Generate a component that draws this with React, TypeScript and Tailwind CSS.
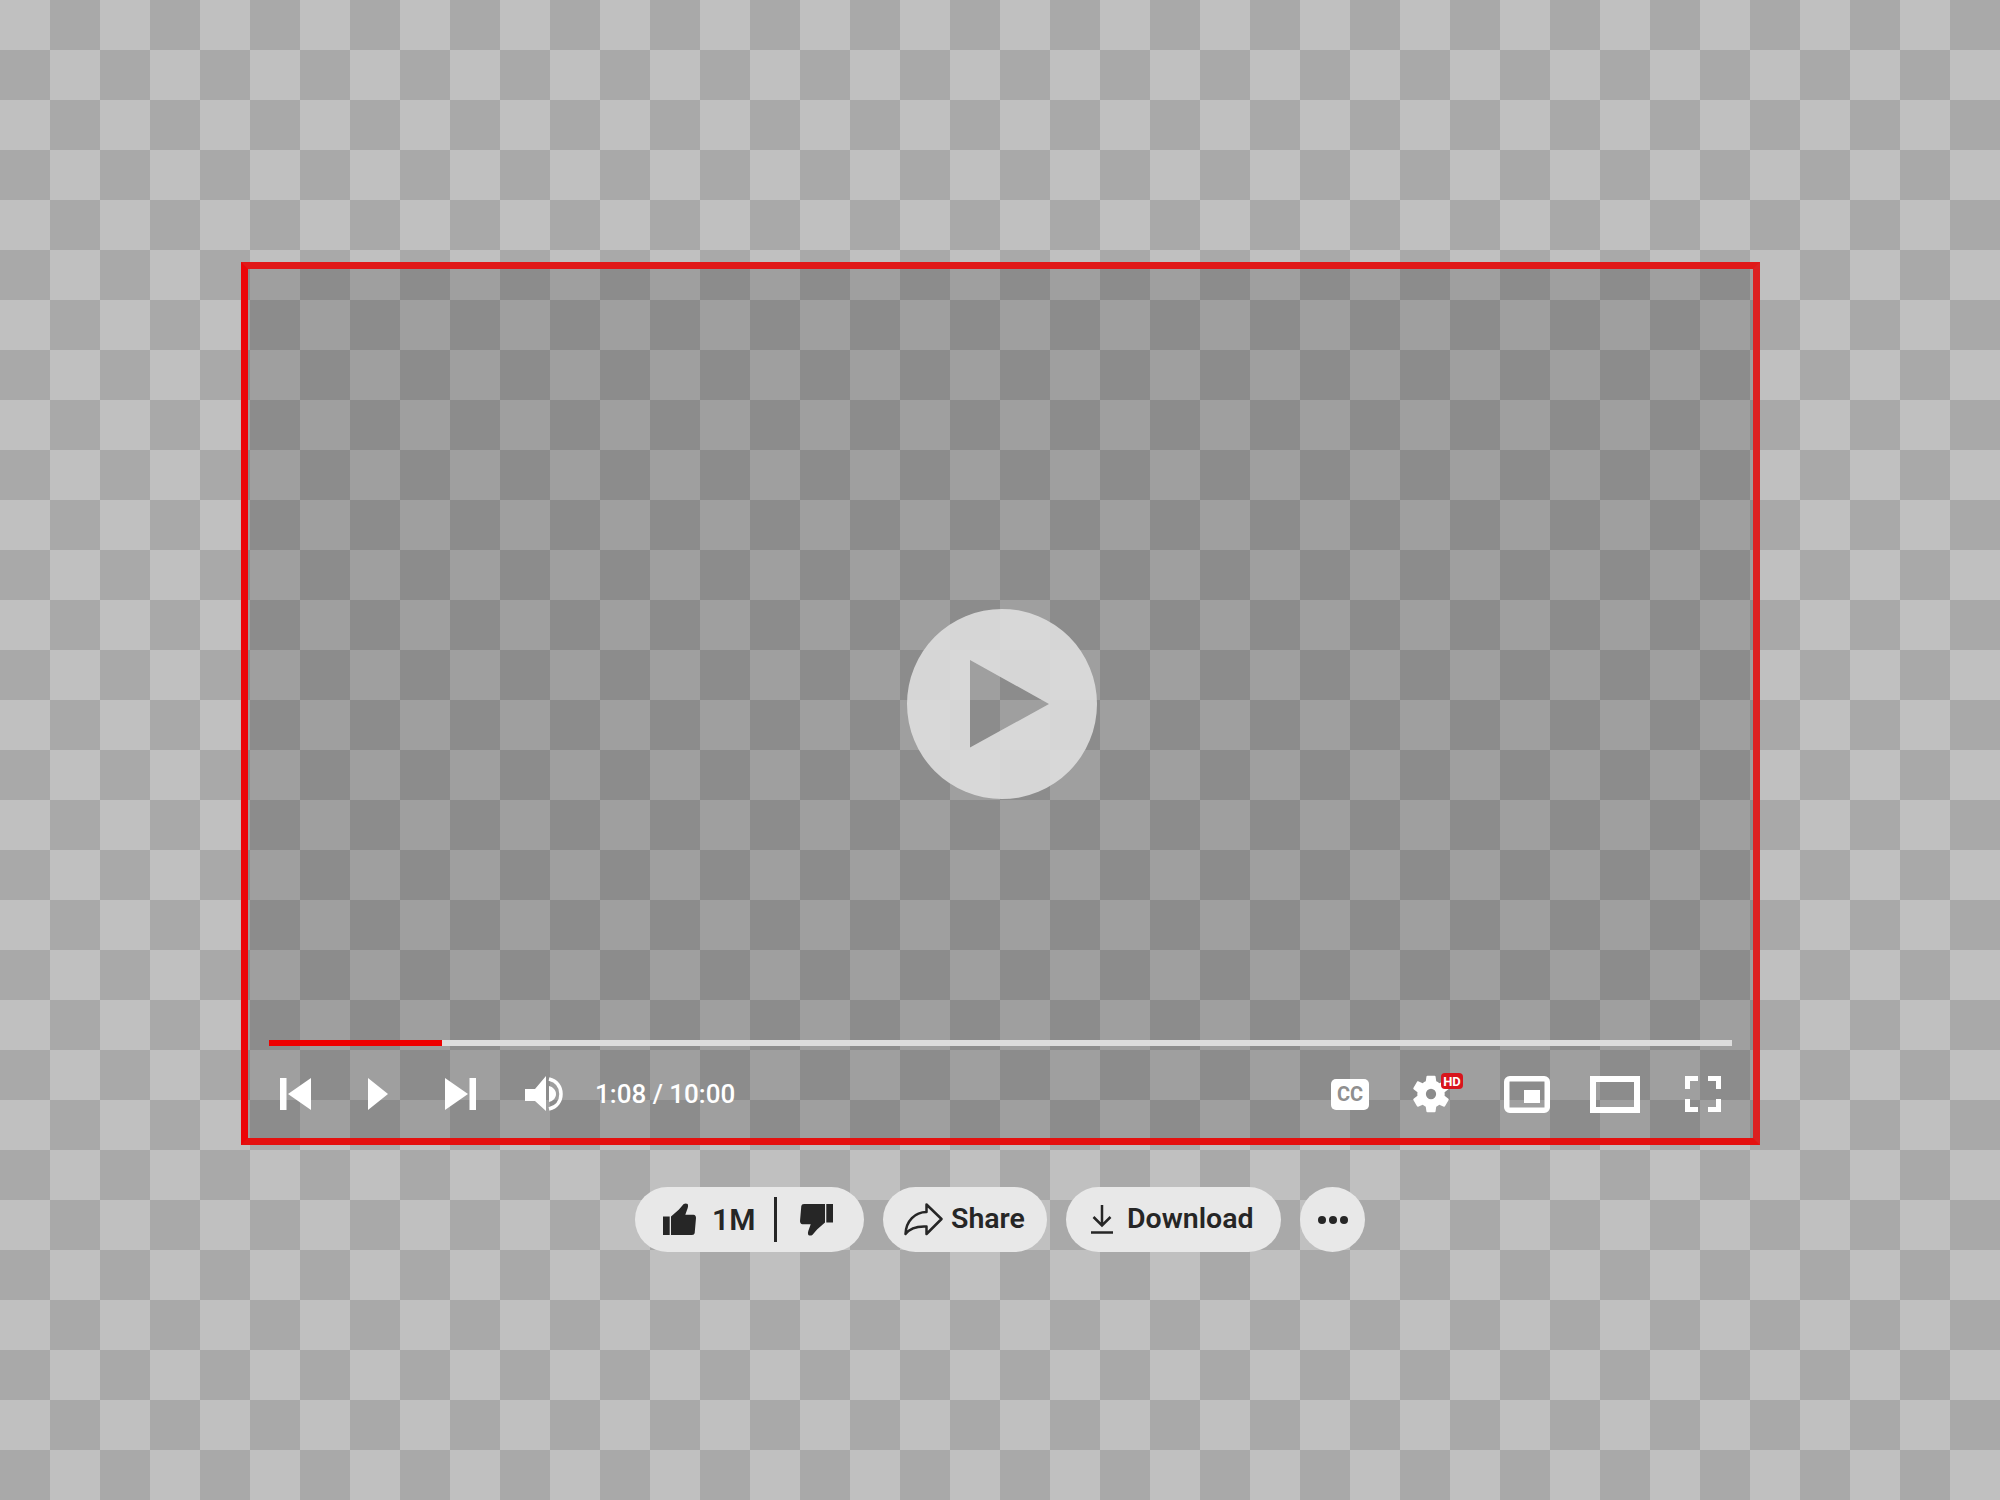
const thumbPath =
  "M0 13.5h6.7V32H0z M8 13.5L15.7 6.7L20.7 1Q22.7 0 24.7 1Q25.5 3 24.7 5L22.3 11.7H30.5Q33 12 33 15L31.7 30Q31.5 32 29 32H8z";

function ThumbIcon({ down }: { down?: boolean }) {
  return (
    <svg width="33" height="33" viewBox="0 0 33 33" className={down ? "rotate-180" : ""}>
      <path d={thumbPath} fill="#262626" />
    </svg>
  );
}

function Gear() {
  return (
    <svg width="36" height="38" viewBox="2.6 2 18.8 20">
      <path
        fill="#fff"
        fillRule="evenodd"
        d="M19.14 12.94c.04-.3.06-.61.06-.94 0-.32-.02-.64-.07-.94l2.03-1.58c.18-.14.23-.41.12-.61l-1.92-3.32c-.12-.22-.37-.29-.59-.22l-2.39.96c-.5-.38-1.03-.7-1.62-.94l-.36-2.54c-.04-.24-.24-.41-.48-.41h-3.84c-.24 0-.43.17-.47.41l-.36 2.54c-.59.24-1.13.57-1.62.94l-2.39-.96c-.22-.08-.47 0-.59.22L2.74 8.87c-.12.21-.08.47.12.61l2.03 1.58c-.05.3-.09.63-.09.94s.02.64.07.94l-2.03 1.58c-.18.14-.23.41-.12.61l1.92 3.32c.12.22.37.29.59.22l2.39-.96c.5.38 1.03.7 1.62.94l.36 2.54c.05.24.24.41.48.41h3.84c.24 0 .44-.17.47-.41l.36-2.54c.59-.24 1.13-.56 1.62-.94l2.39.96c.22.08.47 0 .59-.22l1.92-3.32c.12-.22.07-.47-.12-.61l-2.01-1.58zM12 14.7a2.7 2.7 0 1 1 0-5.4 2.7 2.7 0 0 1 0 5.4z"
      />
    </svg>
  );
}

function PlayerControls() {
  return (
    <div className="flex h-[92px] items-center justify-between px-8 pt-1">
      <div className="flex items-center">
        <svg width="31" height="32" viewBox="0 0 31 32" fill="#fff">
          <path d="M0 0h6.5v32H0z M8 16L31 0v32z" />
        </svg>
        <svg width="20" height="32" viewBox="0 0 20 32" fill="#fff" className="ml-[57px]">
          <path d="M0 0L20 16L0 32z" />
        </svg>
        <svg width="31" height="32" viewBox="0 0 31 32" fill="#fff" className="ml-[57px]">
          <path d="M0 0L23 16L0 32z M24.5 0H31v32h-6.5z" />
        </svg>
        <svg width="38" height="36" viewBox="0 0 38 36" className="ml-[49px]">
          <path d="M0 13h10L21 0v35L10 25H0z" fill="#fff" />
          <path d="M24 10c4 1 7 4 7 8s-3 7-7 8z" fill="#fff" />
          <path d="M24 3c8 2 12 8 12 15s-4 13-12 15" fill="none" stroke="#fff" strokeWidth="3.5" />
        </svg>
        <span className="ml-8 text-[26px] font-medium leading-none text-white">1:08 / 10:00</span>
      </div>
      <div className="flex items-center">
        <div className="flex h-[31px] w-[38px] items-center justify-center rounded-[5px] bg-white text-[20px] font-bold leading-none text-[#8f8f8f]">
          CC
        </div>
        <div className="relative ml-[44px]">
          <Gear />
          <span className="absolute -right-[14px] -top-[2px] flex h-4 w-[22px] items-center justify-center rounded-[4px] bg-[#d8141c] text-[13px] font-bold leading-none text-white">
            HD
          </span>
        </div>
        <svg width="46" height="37" viewBox="0 0 46 37" className="ml-[55px]">
          <rect x="2.75" y="2.75" width="40.5" height="31.5" rx="3" fill="none" stroke="#fff" strokeWidth="5.5" />
          <rect x="20" y="14" width="16" height="13" fill="#fff" />
        </svg>
        <svg width="50" height="37" viewBox="0 0 50 37" className="ml-10">
          <rect x="3" y="3" width="44" height="31" fill="none" stroke="#fff" strokeWidth="6" />
        </svg>
        <svg width="36" height="36" viewBox="0 0 36 36" className="ml-[45px]">
          <path
            d="M2.5 13V2.5H13M23 2.5H33.5V13M33.5 23V33.5H23M13 33.5H2.5V23"
            fill="none"
            stroke="#fff"
            strokeWidth="5"
          />
        </svg>
      </div>
    </div>
  );
}

function ActionBar() {
  const pill = "flex h-[65px] items-center rounded-full bg-[#e8e8e8] text-[28.5px] font-semibold leading-none text-[#262626]";
  return (
    <div className="mt-[42px] flex items-center gap-[19px]">
      <div className={pill + " w-[229px] pl-7"}>
        <ThumbIcon />
        <span className="ml-4 text-[30px]">1M</span>
        <div className="ml-[19px] h-[45px] w-[3px] bg-[#262626]" />
        <div className="ml-[23px]">
          <ThumbIcon down />
        </div>
      </div>
      <div className={pill + " w-[164px] pl-[21px]"}>
        <svg width="39" height="33" viewBox="0 0 39 33">
          <path
            d="M1.5 31C2 18 11 9 22.5 9V1.5L37.5 16L22.5 31V23.5C13 23 6 25 1.5 31z"
            fill="none"
            stroke="#262626"
            strokeWidth="2.5"
            strokeLinejoin="round"
          />
        </svg>
        <span className="ml-2">Share</span>
      </div>
      <div className={pill + " w-[215px] pl-[25px]"}>
        <svg width="22" height="29" viewBox="0 0 22 29" fill="none" stroke="#262626" strokeWidth="2.5">
          <path d="M11 0V20M2.5 12L11 20.5L19.5 12M0 27.5H22" />
        </svg>
        <span className="ml-[14px]">Download</span>
      </div>
      <div className={pill + " w-[65px] justify-center gap-[3px]"}>
        <div className="size-2 rounded-full bg-[#262626]" />
        <div className="size-2 rounded-full bg-[#262626]" />
        <div className="size-2 rounded-full bg-[#262626]" />
      </div>
    </div>
  );
}

export default function App() {
  return (
    <div className="flex min-h-[1500px] w-full flex-col items-center bg-[image:conic-gradient(#a9a9a9_25%,#c0c0c0_0_50%,#a9a9a9_0_75%,#c0c0c0_0)] bg-[length:100px_100px] pt-[262px] [font-family:Roboto,sans-serif]">
      <div className="ml-px flex h-[883px] w-[1519px] flex-col border-[7px] border-t-[#e01818] border-r-[#dc2020] border-b-[#e4100f] border-l-[#ec0408] bg-black/[.17]">
        <div className="flex flex-1 justify-center pl-[2px] pt-[340px]">
          <svg width="190" height="190" viewBox="0 0 190 190">
            <path
              fill="#dedede"
              fillOpacity=".9"
              fillRule="evenodd"
              d="M95 0a95 95 0 1 0 0 190a95 95 0 1 0 0-190z M63 51V138.500L142 95z"
            />
          </svg>
        </div>
        <div className="mx-[21px] flex h-[6px]">
          <div className="w-[173px] bg-[#ee0000]" />
          <div className="flex-1 bg-[#dcdcdc]" />
        </div>
        <PlayerControls />
      </div>
      <ActionBar />
    </div>
  );
}
